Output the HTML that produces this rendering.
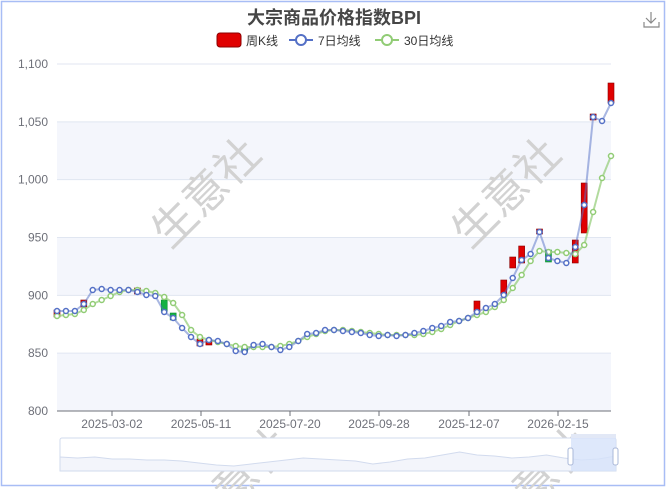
<!DOCTYPE html>
<html><head><meta charset="utf-8"><style>
html,body{margin:0;padding:0;background:#fff;width:669px;height:489px;overflow:hidden}
svg{display:block;overflow:hidden}
text{font-family:"Liberation Sans","Noto Sans CJK SC",sans-serif}
</style></head><body>
<svg id="s" width="669" height="489" viewBox="0 0 669 489" xmlns="http://www.w3.org/2000/svg">
<defs><clipPath id="cp"><rect x="0" y="0" width="669" height="489"/></clipPath></defs>
<g clip-path="url(#cp)">
<rect x="1.5" y="1.5" width="663" height="484" fill="#fff" stroke="#a8bdf5" stroke-width="1.5"/>
<g id="bands"></g>
<g id="wm" fill="#d2d2d2" font-size="44" font-family="Noto Sans CJK SC,sans-serif">
<text transform="translate(170,250) rotate(-45)">生意社</text>
<text transform="translate(470,250) rotate(-45)">生意社</text>
<text transform="translate(200,540) rotate(-45)">生意社</text>
<text transform="translate(500,540) rotate(-45)">生意社</text>
</g>
<text x="334" y="24" text-anchor="middle" font-size="18" font-weight="bold" fill="#464646" font-family="Noto Sans CJK SC,sans-serif">大宗商品价格指数BPI</text>
<rect x="217" y="33" width="24" height="14" rx="3" fill="#e00000" stroke="#8b0000"/>
<text x="246" y="45" font-size="12" fill="#333" font-family="Noto Sans CJK SC,sans-serif">周K线</text>
<line x1="289" y1="40" x2="313" y2="40" stroke="#5470c6" stroke-width="2"/><circle cx="301" cy="40" r="5" fill="#fff" stroke="#5470c6" stroke-width="2"/>
<text x="318" y="45" font-size="12" fill="#333" font-family="Noto Sans CJK SC,sans-serif">7日均线</text>
<line x1="375" y1="40" x2="399" y2="40" stroke="#91cc75" stroke-width="2"/><circle cx="387" cy="40" r="5" fill="#fff" stroke="#91cc75" stroke-width="2"/>
<text x="404" y="45" font-size="12" fill="#333" font-family="Noto Sans CJK SC,sans-serif">30日均线</text>
<g stroke="#888" fill="none" stroke-width="1.2"><path d="M651 12v11M646 18l5 5 5-5M644 22v5h15v-5"/></g>
<g id="chart"></g>
<g id="dz"></g>
</g>
</svg>
<script>
var S=document.getElementById('s'),NS='http://www.w3.org/2000/svg';
function el(t,a,p,txt){var e=document.createElementNS(NS,t);for(var k in a)e.setAttribute(k,a[k]);if(txt)e.textContent=txt;(p||document.getElementById('chart')).appendChild(e);return e}
var B=document.getElementById('bands');
function Y(v){return 411-(v-800)*347/300}
[[1050,1000],[950,900],[850,800]].forEach(function(b){el('rect',{x:57,y:Y(b[0]),width:554,height:Y(b[1])-Y(b[0]),fill:'#f4f6fc'},B)});
[800,850,900,950,1000,1050,1100].forEach(function(v){
 el('line',{x1:57,x2:611,y1:Y(v),y2:Y(v),stroke:v==800?'#6e7079':'#e0e6f1'},B);
 el('text',{x:48,y:Y(v)+4,'text-anchor':'end','font-size':12,fill:'#6e7079'},B,v>=1000?(''+v).replace(/^(\d)/,'$1,'):''+v);
});
var lab=['2025-03-02','2025-05-11','2025-07-20','2025-09-28','2025-12-07','2026-02-15'],lx=[112,201,290,379,469,558];
lab.forEach(function(l,i){el('line',{x1:lx[i],x2:lx[i],y1:411,y2:416,stroke:'#6e7079'},B);el('text',{x:lx[i],y:428,'text-anchor':'middle','font-size':12,fill:'#6e7079'},B,l)});
var blue=[311,311,311,304,290,289,290,290,290,292,295,296,312,318,328,337,344,340,341,344,351,352,345,344,347,350,347,341,334,333,330,330,331,332,333,335,336,335,336,335,333,331,328,326,322,321,318,312,308,304,295,278,260,254,232,258,261,263,247,205,117,121,103];
var green=[316,315,314,310,304,300,296,292,290,290,291,293,297,303,315,330,337,340,342,344,346,347,347,347,347,346,344,341,337,334,331,330,330,331,332,333,334,335,335,335,335,334,332,329,325,321,318,315,312,307,300,288,275,261,251,252,252,253,254,245,212,178,156];
function X(i){return 57+i*(554/62)}
var C=[[3,300,307,1],[12,300,312,0],[13,313,320,0],[16,339,346,1],[17,340,345,1],[21,348,352,0],[47,301,312,1],[50,280,295,1],[51,257,268,1],[52,246,263,1],[54,229,234,1],[55,250,262,0],[58,240,263,1],[59,183,233,1],[60,114,120,1],[62,83,103,1],[0,310,317,1],[9,288,294,1]];
C.forEach(function(c){el('rect',{x:X(c[0])-3,y:c[1],width:6,height:c[2]-c[1],fill:c[3]?'#e00000':'#14b143',stroke:c[3]?'#8b0000':'#0a8a30','stroke-width':0.6})});
function line(d,col,op){var p='';d.forEach(function(y,i){p+=(i?'L':'M')+X(i).toFixed(1)+' '+y});el('path',{d:p,fill:'none',stroke:col,'stroke-width':2,'stroke-opacity':op,'stroke-linejoin':'round'});d.forEach(function(y,i){el('circle',{cx:X(i),cy:y,r:2.5,fill:'#fff',stroke:col,'stroke-width':1.5})})}
line(green,'#91cc75',0.7);line(blue,'#5470c6',0.5);
var D=document.getElementById('dz');
el('rect',{x:60,y:438,width:556,height:33,rx:2,fill:'#fff',stroke:'#d2dbee'},D);
var p='M60 457',pts=[457,458,457,459,459,460,460,461,463,465,466,464,462,460,458,459,460,461,464,462,459,458,455,452,455,456,458,457,455,458,460,459,456];
pts.forEach(function(y,i){p+='L'+(60+i*556/(pts.length-1)).toFixed(1)+' '+y});
el('path',{d:p+'L616 471L60 471Z',fill:'#f3f5fb',stroke:'#d2dbee'},D);
el('rect',{x:571,y:438,width:45,height:33,fill:'#d6e2fa',opacity:0.8},D);
el('rect',{x:571,y:434,width:45,height:4,fill:'#e2e8f6'},D);
el('rect',{x:568,y:448,width:5,height:17,rx:2,fill:'#fff',stroke:'#aab8d8'},D);
el('rect',{x:613,y:448,width:5,height:17,rx:2,fill:'#fff',stroke:'#aab8d8'},D);
</script>
</body></html>
